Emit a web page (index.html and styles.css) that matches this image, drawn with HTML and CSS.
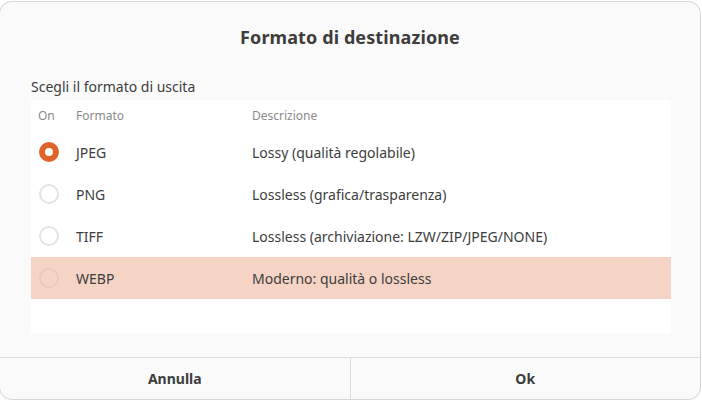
FILE: index.html
```html
<!DOCTYPE html>
<html lang="it">
<head>
<meta charset="utf-8">
<title>Formato di destinazione</title>
<link rel="stylesheet" href="styles.css">
</head>
<body>
<div class="backdrop">
  <div class="dialog">
    <div class="title">Formato di destinazione</div>
    <div class="content">
      <div class="label">Scegli il formato di uscita</div>
      <div class="list">
        <div class="row header">
          <div class="c-on">On</div>
          <div class="c-fmt">Formato</div>
          <div class="c-desc">Descrizione</div>
        </div>
        <div class="row">
          <div class="c-on"><span class="radio checked"></span></div>
          <div class="c-fmt">JPEG</div>
          <div class="c-desc">Lossy (qualità regolabile)</div>
        </div>
        <div class="row">
          <div class="c-on"><span class="radio"></span></div>
          <div class="c-fmt">PNG</div>
          <div class="c-desc">Lossless (grafica/trasparenza)</div>
        </div>
        <div class="row">
          <div class="c-on"><span class="radio"></span></div>
          <div class="c-fmt">TIFF</div>
          <div class="c-desc">Lossless (archiviazione: LZW/ZIP/JPEG/NONE)</div>
        </div>
        <div class="row selected">
          <div class="c-on"><span class="radio"></span></div>
          <div class="c-fmt">WEBP</div>
          <div class="c-desc">Moderno: qualità o lossless</div>
        </div>
      </div>
    </div>
    <div class="buttons">
      <div class="btn">Annulla</div>
      <div class="btn">Ok</div>
    </div>
  </div>
</div>
</body>
</html>
```

FILE: styles.css
```css
html, body {
  margin: 0;
  padding: 0;
  background: #ffffff;
}
body {
  width: 702px;
  height: 402px;
  overflow: hidden;
  font-family: "Noto Sans", "Open Sans", sans-serif;
  color: #3d3d3d;
}
.backdrop {
  padding: 2px 2px 3px 0;
  height: 402px;
  box-sizing: border-box;
}
.dialog {
  height: 397px;
  background: #fafafa;
  border-radius: 12px;
  box-shadow: 0 0 0 1px #d6d6d6;
  display: flex;
  flex-direction: column;
  overflow: hidden;
}
.title {
  text-align: center;
  font-weight: bold;
  font-size: 18px;
  line-height: 24px;
  padding-top: 23px;
  height: 24px;
  letter-spacing: 0.1px;
}
.content {
  padding: 28px 29px 0 31px;
  flex: 1;
}
.label {
  font-size: 14px;
  line-height: 20px;
  height: 20px;
  margin-bottom: 3px;
}
.list {
  background: #ffffff;
  height: 233px;
}
.row {
  display: flex;
  align-items: center;
  height: 42px;
  font-size: 14px;
}
.row.header {
  height: 31px;
  font-size: 12px;
  color: #8a8a8a;
}
.row.selected {
  background: #f5d4c6;
}
.c-on {
  width: 45px;
  padding-left: 7px;
  box-sizing: border-box;
  display: flex;
  align-items: center;
}
.c-fmt {
  width: 176px;
}
.c-desc {
  flex: 1;
}
.radio {
  display: block;
  width: 20px;
  height: 20px;
  box-sizing: border-box;
  border-radius: 50%;
  border: 2px solid #e3e3e3;
  margin-left: 1px;
}
.row.selected .radio {
  border-color: #ecc8b9;
}
.radio.checked {
  border: 6.5px solid #e0632a;
  background: #ffffff;
}
.buttons {
  display: flex;
  height: 41px;
  border-top: 1px solid #dcdcdc;
}
.btn {
  flex: 1;
  display: flex;
  align-items: center;
  justify-content: center;
  font-weight: bold;
  font-size: 14px;
  padding-bottom: 1px;
}
.btn + .btn {
  border-left: 1px solid #dcdcdc;
}
```
